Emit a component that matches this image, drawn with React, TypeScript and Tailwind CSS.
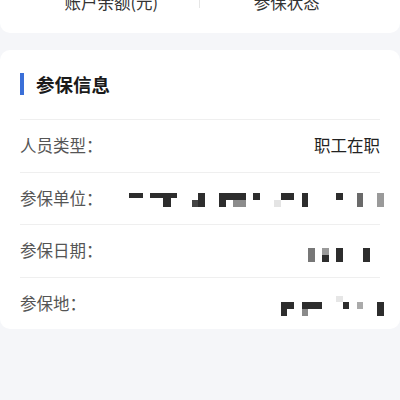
import React from 'react';

type Block = [number, number, number, number, string];

const DARK = '#2d2d2d';

// pixelated (mosaic) values, coordinates inside a 260x28 box
const unitMask: Block[] = [
  [5, 9, 14, 5, DARK],
  [26, 9, 27, 5, DARK],
  [39, 14, 8, 9, DARK],
  [68, 16, 6, 7, '#444444'],
  [74, 9, 7, 14, DARK],
  [95, 9, 27, 7, DARK],
  [95, 16, 7, 7, DARK],
  [109, 16, 13, 7, '#8c8c8c'],
  [129, 9, 7, 7, DARK],
  [150, 16, 7, 7, '#e4e4e4'],
  [157, 9, 13, 7, DARK],
  [178, 9, 6, 14, DARK],
  [212, 9, 7, 7, DARK],
  [233, 9, 6, 14, '#6a6a6a'],
  [253, 9, 7, 14, '#9a9a9a'],
];

const dateMask: Block[] = [
  [184, 11, 7, 14, '#777777'],
  [198, 11, 7, 7, '#9a9a9a'],
  [198, 18, 7, 7, DARK],
  [212, 11, 7, 14, DARK],
  [239, 11, 7, 14, DARK],
];

const placeMask: Block[] = [
  [157, 13, 13, 7, DARK],
  [157, 20, 6, 7, DARK],
  [178, 13, 20, 7, DARK],
  [178, 20, 6, 7, '#8a8a8a'],
  [212, 7, 7, 6, '#e6e6e6'],
  [219, 13, 6, 7, DARK],
  [233, 13, 6, 7, '#aaaaaa'],
  [253, 13, 7, 14, DARK],
];

const Mosaic: React.FC<{ blocks: Block[] }> = ({ blocks }) => (
  <svg width="260" height="28" viewBox="0 0 260 28" className="mr-[-4px] shrink-0">
    {blocks.map(([x, y, w, h, c], i) => (
      <rect key={i} x={x} y={y} width={w} height={h} fill={c} />
    ))}
  </svg>
);

const Row: React.FC<{ label: string; children: React.ReactNode }> = ({ label, children }) => (
  <div className="flex h-[52.5px] items-center justify-between border-t border-[#efefef]">
    <span className="text-[16.5px] text-[#555555] whitespace-nowrap">{label}</span>
    {children}
  </div>
);

export default function App() {
  return (
    <div
      className="h-[400px] w-[400px] overflow-hidden bg-[#f5f6f9]"
      style={{ fontFamily: '"Noto Sans CJK SC", "Noto Sans", sans-serif' }}
    >
      {/* account summary card (scrolled, only its bottom shows) */}
      <div className="flex h-[33px] overflow-hidden rounded-b-[10px] bg-white">
        <div className="flex flex-1 justify-center pl-[24px]">
          <span className="-mt-[10px] text-[16.5px] leading-6 text-[#333333]">账户余额(元)</span>
        </div>
        <div className="h-[8px] w-px bg-[#e6e6e6]" />
        <div className="flex flex-1 justify-center pr-[26px]">
          <span className="-mt-[10px] text-[16.5px] leading-6 text-[#333333]">参保状态</span>
        </div>
      </div>

      {/* insurance info card */}
      <div className="mt-[17px] rounded-[10px] bg-white px-5 pt-[23px]">
        <div className="flex h-[22px] items-center gap-3">
          <div className="h-[22px] w-[4px] bg-[#3a6fd8]" />
          <span className="text-[18.5px] font-bold leading-[22px] text-[#1a1a1a]">参保信息</span>
        </div>
        <div className="mt-[24px]">
          <Row label="人员类型：">
            <span className="text-[16.5px] text-[#222222]">职工在职</span>
          </Row>
          <Row label="参保单位：">
            <Mosaic blocks={unitMask} />
          </Row>
          <Row label="参保日期：">
            <Mosaic blocks={dateMask} />
          </Row>
          <Row label="参保地：">
            <Mosaic blocks={placeMask} />
          </Row>
        </div>
      </div>
    </div>
  );
}
